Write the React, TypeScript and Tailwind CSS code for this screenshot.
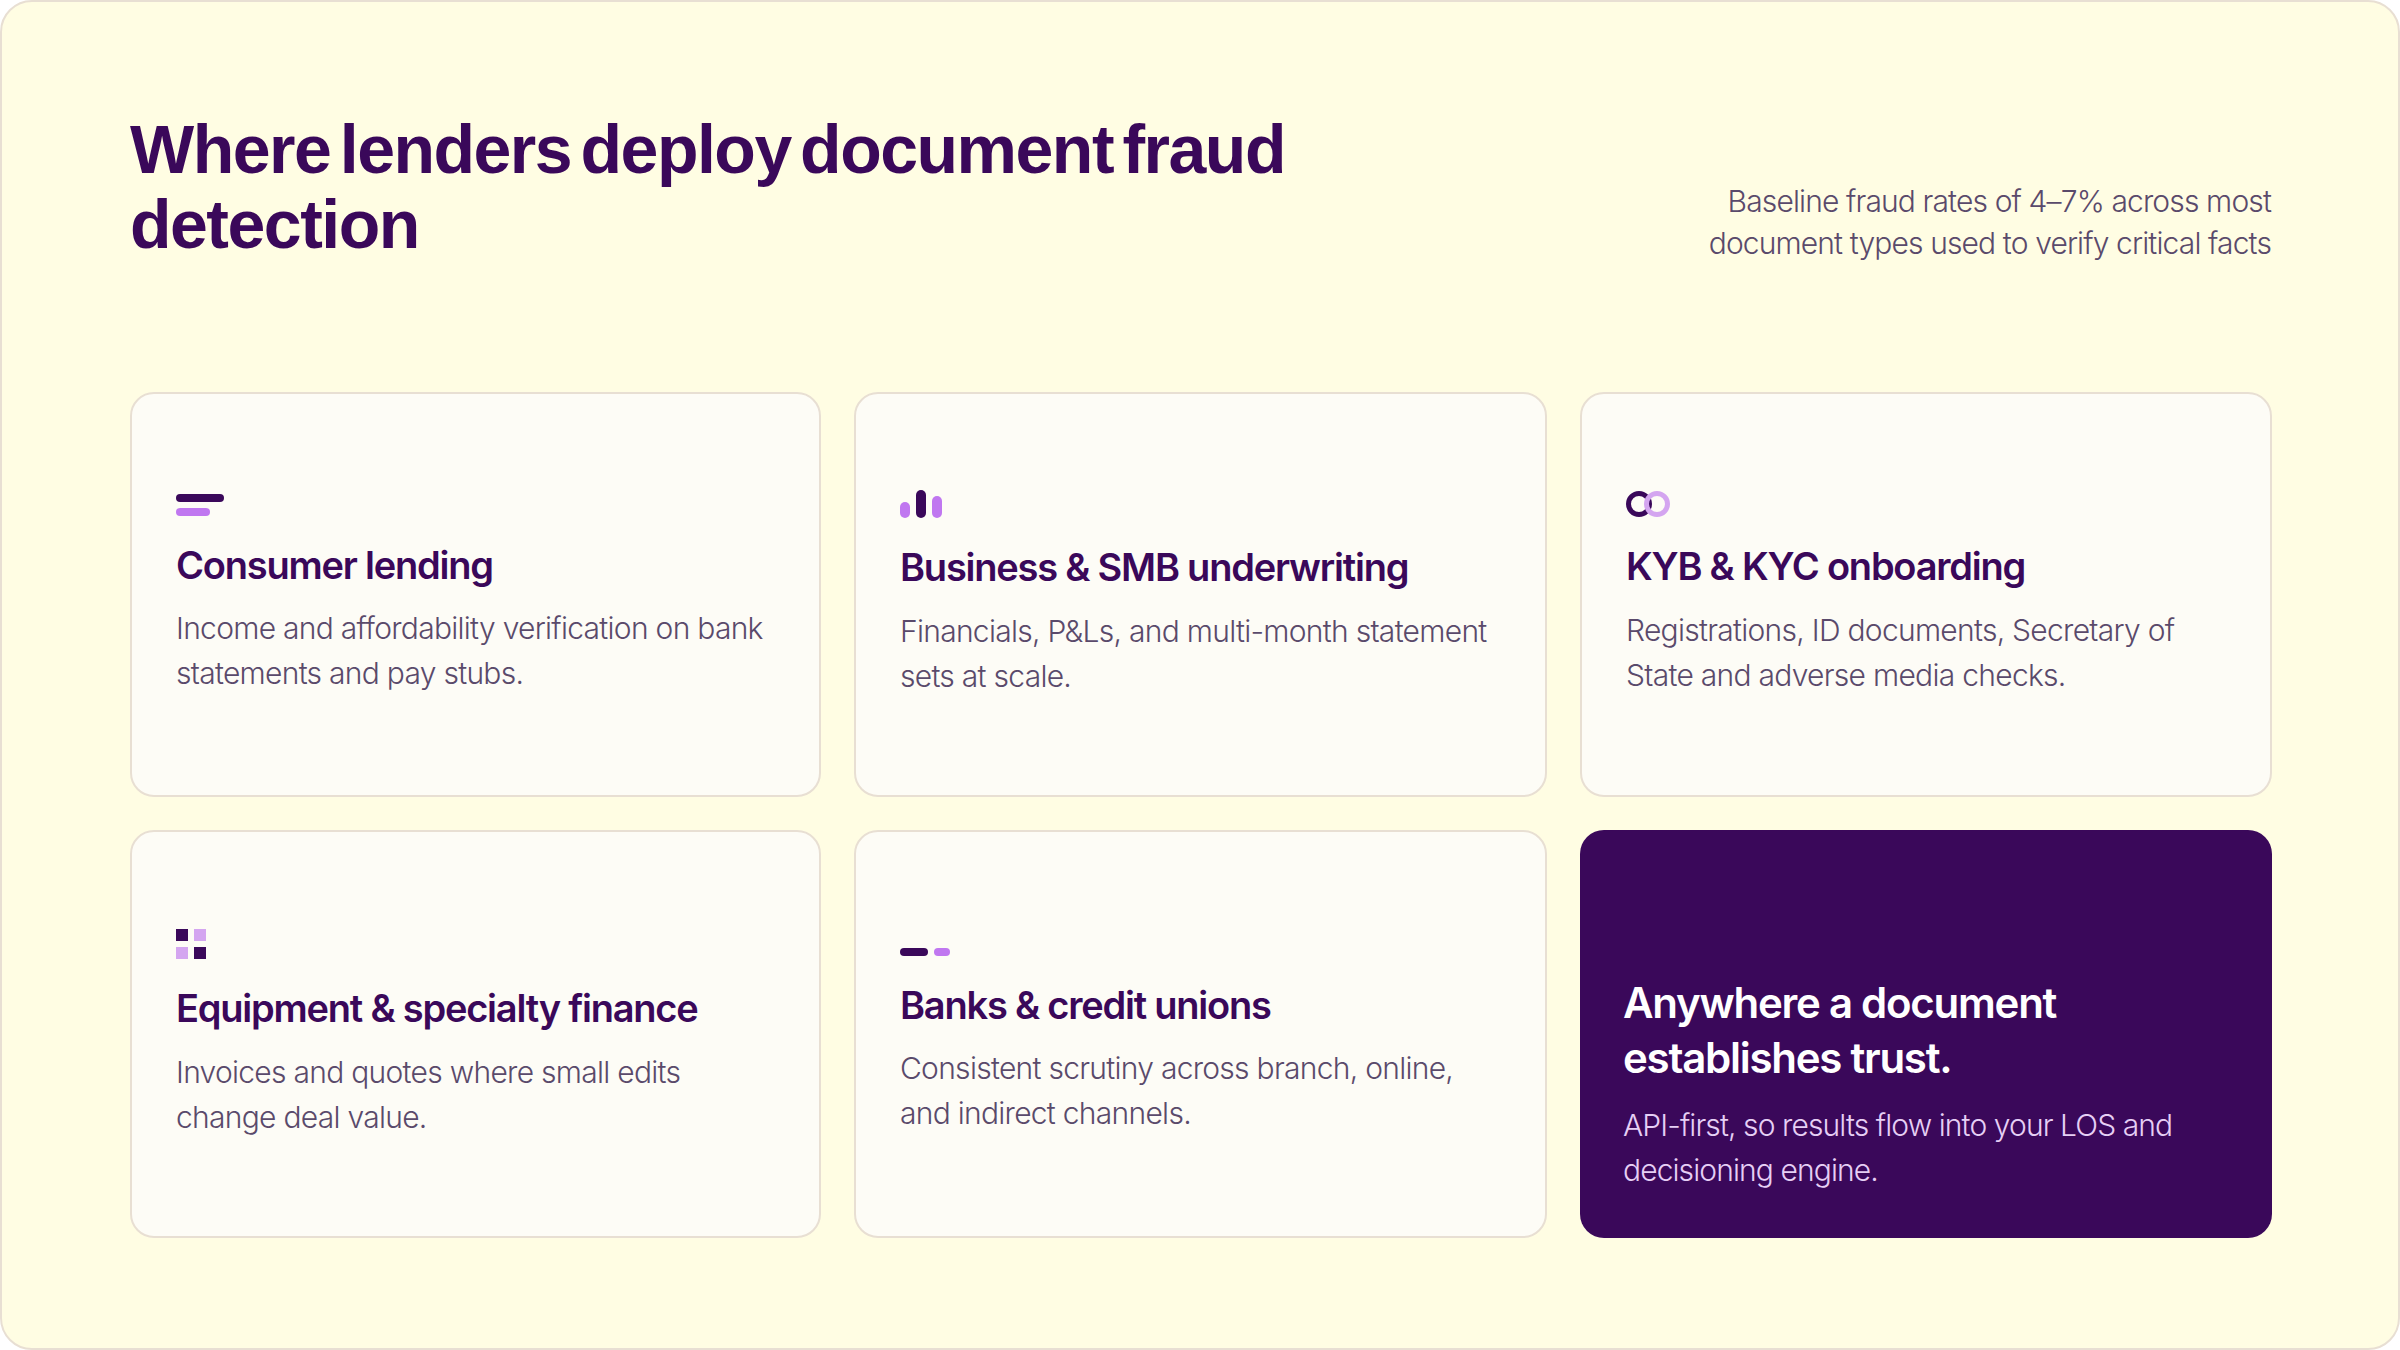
import type { ReactNode } from "react";

const BarsIcon = () => (
  <div className="flex flex-col items-start gap-[6px]">
    <div className="h-[8px] w-[48px] rounded-full bg-[#3a085a]" />
    <div className="h-[8px] w-[34px] rounded-full bg-[#c077f0]" />
  </div>
);

const ChartIcon = () => (
  <div className="flex items-end gap-[6px]">
    <div className="h-[16px] w-[10px] rounded-[5px] bg-[#c077f0]" />
    <div className="h-[28px] w-[10px] rounded-[5px] bg-[#3a085a]" />
    <div className="h-[22px] w-[10px] rounded-[5px] bg-[#c077f0]" />
  </div>
);

const RingsIcon = () => (
  <svg width="44" height="26" viewBox="0 0 44 26" fill="none">
    <circle cx="13" cy="13" r="10.5" stroke="#3a085a" strokeWidth="5" />
    <circle cx="31" cy="13" r="10.5" stroke="#d4a5f0" strokeWidth="5" />
  </svg>
);

const SquaresIcon = () => (
  <div className="grid w-[30px] grid-cols-2 gap-[6px]">
    <div className="h-[12px] w-[12px] bg-[#3a085a]" />
    <div className="h-[12px] w-[12px] bg-[#d4a5f0]" />
    <div className="h-[12px] w-[12px] bg-[#d4a5f0]" />
    <div className="h-[12px] w-[12px] bg-[#3a085a]" />
  </div>
);

const DashIcon = () => (
  <div className="flex gap-[6px] pt-[16px]">
    <div className="h-[8px] w-[28px] rounded-full bg-[#3a085a]" />
    <div className="h-[8px] w-[16px] rounded-full bg-[#c077f0]" />
  </div>
);

const Card = ({
  icon,
  title,
  text,
  titleGap = "mb-[18px]",
}: {
  icon: ReactNode;
  title: string;
  text: string;
  titleGap?: string;
}) => (
  <div className="flex flex-col justify-center rounded-[24px] border-2 border-[#e8dfd3] bg-[#fdfcf6] px-[44px]">
    <div className="mb-[26px]">{icon}</div>
    <h3 className={`${titleGap} text-[38px] leading-[46px] font-semibold tracking-[-0.032em] text-[#3a085a]`}>{title}</h3>
    <p className="text-[30px] leading-[45px] font-light tracking-[-0.024em] text-[#5a4a6b]">{text}</p>
  </div>
);

export default function App() {
  return (
    <div className="h-[1350px] w-[2400px] bg-white font-['Inter',sans-serif]">
      <div className="flex h-full flex-col rounded-[32px] border-2 border-[#e8dfd3] bg-[#fffde3] pt-[110px] pr-[126px] pl-[128px]">
        <header className="flex items-end justify-between">
          <h1 className="w-[1250px] font-['Liberation_Sans',sans-serif] text-[68px] leading-[75px] font-bold tracking-[-0.022em] [word-spacing:-8px] text-[#3a085a]">
            Where lenders deploy document fraud detection
          </h1>
          <p className="mr-[1px] -mb-[2px] text-right text-[30px] leading-[42px] font-light tracking-[-0.029em] text-[#5a4a6b]">
            Baseline fraud rates of 4–7% across most
            <br />
            document types used to verify critical facts
          </p>
        </header>
        <div className="mt-[130px] grid grid-cols-[691px_693px_692px] grid-rows-[405px_408px] gap-[33px]">
          <Card
            icon={<BarsIcon />}
            title="Consumer lending"
            text="Income and affordability verification on bank statements and pay stubs."
          />
          <Card
            icon={<ChartIcon />}
            title="Business & SMB underwriting"
            text="Financials, P&Ls, and multi-month statement sets at scale."
            titleGap="mb-[19px]"
          />
          <Card
            icon={<RingsIcon />}
            title="KYB & KYC onboarding"
            text="Registrations, ID documents, Secretary of State and adverse media checks."
            titleGap="mb-[19px]"
          />
          <Card
            icon={<SquaresIcon />}
            title="Equipment & specialty finance"
            text="Invoices and quotes where small edits change deal value."
            titleGap="mb-[19px]"
          />
          <Card
            icon={<DashIcon />}
            title="Banks & credit unions"
            text="Consistent scrutiny across branch, online, and indirect channels."
          />
          <div className="flex flex-col justify-end rounded-[24px] bg-[#3a085a] px-[43px] pb-[45px]">
            <h3 className="mb-[18px] text-[42px] leading-[55px] font-semibold tracking-[-0.03em] text-white">
              Anywhere a document establishes trust.
            </h3>
            <p className="text-[30px] leading-[45px] font-light tracking-[-0.03em] text-[#e6cff5]">
              API-first, so results flow into your LOS and decisioning engine.
            </p>
          </div>
        </div>
      </div>
    </div>
  );
}
